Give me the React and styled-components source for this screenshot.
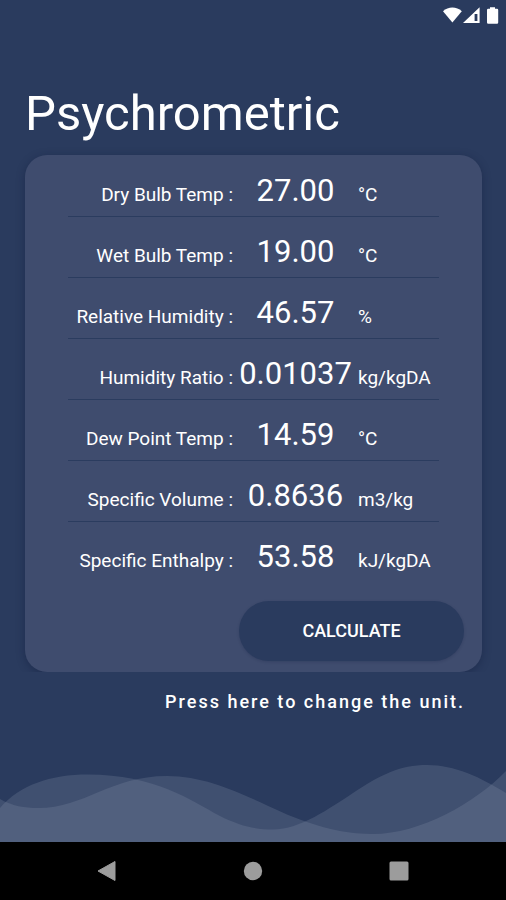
import { useState } from "react";
import styled, { createGlobalStyle } from "styled-components";

const GlobalStyle = createGlobalStyle`
  * {
    box-sizing: border-box;
  }

  body {
    margin: 0;
    background: #2a3b5e;
    color: #fff;
    font-family: Roboto, "Liberation Sans", sans-serif;
  }
`;

const Screen = styled.div`
  min-height: 100vh;
  display: flex;
  flex-direction: column;
`;

const StatusBar = styled.header`
  display: flex;
  justify-content: flex-end;
  padding: 6px 7px 0 0;
  height: 32px;
`;

const Main = styled.main`
  flex: 1;
  display: flex;
  flex-direction: column;
  padding: 50px 24px 0 25px;
`;

const Title = styled.h1`
  margin: 0;
  font-size: 49px;
  font-weight: 400;
  line-height: 64px;
`;

const CardClip = styled.div`
  margin-top: 9px;
  clip-path: inset(-16px -16px 0 -16px);
`;

const Card = styled.form`
  padding: 1px 18px 11px 43px;
  border-radius: 22px;
  background: #3f4c6e;
  box-shadow: 0 2px 8px rgba(16, 26, 58, 0.4);
`;

const Row = styled.div`
  display: grid;
  grid-template-columns: 165fr 125fr 81fr;
  align-items: baseline;
  height: 61px;
  margin-right: 25px;
  padding-top: 14px;
  border-bottom: 1px solid ${(props) => (props.$last ? "transparent" : "#2b3c5f")};
`;

const Label = styled.label`
  font-size: 19px;
  line-height: 40px;
  text-align: right;
  white-space: nowrap;
`;

const Value = styled.input`
  width: 100%;
  min-width: 0;
  height: 40px;
  padding: 0;
  border: 0;
  outline: 0;
  background: transparent;
  color: inherit;
  font-family: inherit;
  font-size: 31px;
  text-align: center;
`;

const Unit = styled.span`
  font-size: 19px;
  white-space: nowrap;
`;

const CalculateButton = styled.button`
  display: block;
  width: 225px;
  height: 60px;
  margin: 18px 0 0 auto;
  padding: 0 0 2px;
  border: 0;
  border-radius: 30px;
  background: #2a3b5e;
  color: inherit;
  font-family: inherit;
  font-size: 18px;
  font-weight: 500;
  box-shadow: 0 1px 3px rgba(16, 26, 58, 0.2);
`;

const UnitLink = styled.a`
  align-self: flex-end;
  margin: 18px 17px 0 0;
  color: inherit;
  font-size: 18px;
  font-weight: 500;
  letter-spacing: 2px;
  line-height: 24px;
  text-decoration: none;
`;

const Waves = styled.svg`
  display: block;
  width: 100%;
  height: 80px;
`;

const NavBar = styled.nav`
  display: flex;
  height: 58px;
  padding: 0 34px;
  background: #000;
`;

const NavButton = styled.button`
  flex: 1;
  display: flex;
  align-items: center;
  justify-content: center;
  padding: 0;
  border: 0;
  background: transparent;
`;

const fields = [
  { id: "dryBulb", label: "Dry Bulb Temp :", value: "27.00", unit: "°C" },
  { id: "wetBulb", label: "Wet Bulb Temp :", value: "19.00", unit: "°C" },
  { id: "humidity", label: "Relative Humidity :", value: "46.57", unit: "%" },
  { id: "ratio", label: "Humidity Ratio :", value: "0.01037", unit: "kg/kgDA" },
  { id: "dewPoint", label: "Dew Point Temp :", value: "14.59", unit: "°C" },
  { id: "volume", label: "Specific Volume :", value: "0.8636", unit: "m3/kg" },
  { id: "enthalpy", label: "Specific Enthalpy :", value: "53.58", unit: "kJ/kgDA" },
];

function StatusIcons() {
  return (
    <svg width="58" height="20" viewBox="0 0 58 20" fill="#fff">
      <path d="M2 5.200C7.200 0.400 15.600 0.400 20.800 5.200L11.400 16.600Z" />
      <path fillRule="evenodd" d="M38.600 1.200V17H22Z M33.600 8V15H36.400V8Z" />
      <path d="M49 1.200H54V2.800H56Q57.200 2.800 57.200 4V16.500Q57.200 17.700 56 17.700H47.300Q46 17.700 46 16.500V4Q46 2.800 47.300 2.800H49Z" />
    </svg>
  );
}

function App() {
  const [values, setValues] = useState(
    Object.fromEntries(fields.map((field) => [field.id, field.value]))
  );

  function onChange(e) {
    setValues({ ...values, [e.target.id]: e.target.value });
  }

  return (
    <Screen>
      <GlobalStyle />
      <StatusBar>
        <StatusIcons />
      </StatusBar>
      <Main>
        <Title>Psychrometric</Title>
        <CardClip>
          <Card onSubmit={(e) => e.preventDefault()}>
            {fields.map((field, i) => (
              <Row key={field.id} $last={i === fields.length - 1}>
                <Label htmlFor={field.id}>{field.label}</Label>
                <Value id={field.id} value={values[field.id]} onChange={onChange} />
                <Unit>{field.unit}</Unit>
              </Row>
            ))}
            <CalculateButton type="submit">CALCULATE</CalculateButton>
          </Card>
        </CardClip>
        <UnitLink href="#units">Press here to change the unit.</UnitLink>
      </Main>
      <Waves viewBox="0 0 506 80" preserveAspectRatio="none" fill="#8391a6" fillOpacity="0.25">
        <path d="M0 46C20 23 50 12.500 88 12.500C155 12.500 190 38 220 54C240 64 255 67.500 273 67.500C300 67.500 330 46 353 31C380 13 400 3 427 3C455 3 480 15 506 31V80H0Z" />
        <path d="M0 37C12 44 25 46 38 46C85 46 110 14 167 14C220 14 265 46 307 60C330 68 350 72 373 72C420 72 475 41 506 9V80H0Z" />
      </Waves>
      <NavBar>
        <NavButton aria-label="Back">
          <svg width="20" height="22" viewBox="0 0 20 22">
            <path d="M18 1.500V20.500L1 11Z" fill="#9c9c9c" stroke="#9c9c9c" strokeLinejoin="round" />
          </svg>
        </NavButton>
        <NavButton aria-label="Home">
          <svg width="20" height="20" viewBox="0 0 20 20">
            <circle cx="10" cy="10" r="9.200" fill="#9c9c9c" />
          </svg>
        </NavButton>
        <NavButton aria-label="Recent apps">
          <svg width="20" height="20" viewBox="0 0 20 20">
            <rect x="0.500" y="0.500" width="19" height="19" rx="1.500" fill="#9c9c9c" />
          </svg>
        </NavButton>
      </NavBar>
    </Screen>
  );
}

export default App;
